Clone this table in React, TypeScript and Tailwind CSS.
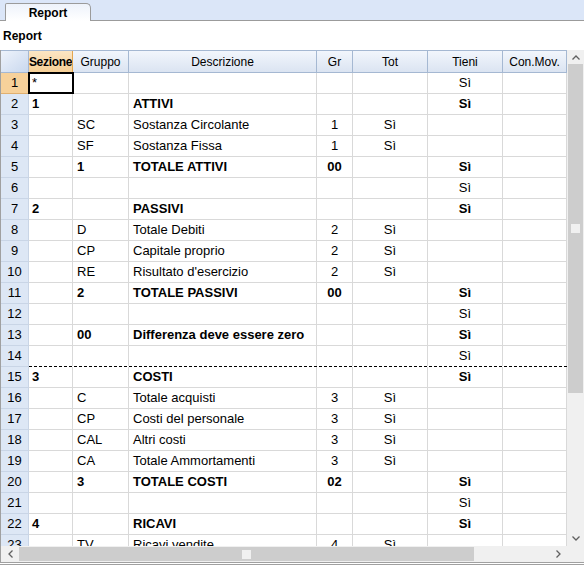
import React from "react";

type Row = {
  n: number;
  s?: string;
  g?: string;
  d?: string;
  gr?: string;
  tot?: string;
  t?: string;
  b?: boolean;
  tb?: boolean;
  dashBelow?: boolean;
};

const rows: Row[] = [
  { n: 1, s: "*", t: "Sì" },
  { n: 2, s: "1", d: "ATTIVI", t: "Sì", b: true, tb: true },
  { n: 3, g: "SC", d: "Sostanza Circolante", gr: "1", tot: "Sì" },
  { n: 4, g: "SF", d: "Sostanza Fissa", gr: "1", tot: "Sì" },
  { n: 5, g: "1", d: "TOTALE ATTIVI", gr: "00", t: "Sì", b: true, tb: true },
  { n: 6, t: "Sì" },
  { n: 7, s: "2", d: "PASSIVI", t: "Sì", b: true, tb: true },
  { n: 8, g: "D", d: "Totale Debiti", gr: "2", tot: "Sì" },
  { n: 9, g: "CP", d: "Capitale proprio", gr: "2", tot: "Sì" },
  { n: 10, g: "RE", d: "Risultato d'esercizio", gr: "2", tot: "Sì" },
  { n: 11, g: "2", d: "TOTALE PASSIVI", gr: "00", t: "Sì", b: true, tb: true },
  { n: 12, t: "Sì" },
  { n: 13, g: "00", d: "Differenza deve essere zero", t: "Sì", b: true, tb: true },
  { n: 14, t: "Sì", dashBelow: true },
  { n: 15, s: "3", d: "COSTI", t: "Sì", b: true, tb: true },
  { n: 16, g: "C", d: "Totale acquisti", gr: "3", tot: "Sì" },
  { n: 17, g: "CP", d: "Costi del personale", gr: "3", tot: "Sì" },
  { n: 18, g: "CAL", d: "Altri costi", gr: "3", tot: "Sì" },
  { n: 19, g: "CA", d: "Totale Ammortamenti", gr: "3", tot: "Sì" },
  { n: 20, g: "3", d: "TOTALE COSTI", gr: "02", t: "Sì", b: true, tb: true },
  { n: 21, t: "Sì" },
  { n: 22, s: "4", d: "RICAVI", t: "Sì", b: true, tb: true },
  { n: 23, g: "TV", d: "Ricavi vendite", gr: "4", tot: "Sì" },
];

export default function App() {
  const hdr =
    "h-full shrink-0 flex items-center justify-center border-r border-[#a5b8d2] bg-gradient-to-b from-[#f2f6fc] to-[#dbe4f2] whitespace-nowrap overflow-hidden";
  return (
    <div
      className="w-[584px] h-[565px] bg-white overflow-hidden flex flex-col text-black"
      style={{ fontFamily: '"Liberation Sans", Arial, sans-serif' }}
    >
      {/* Tab bar */}
      <div className="h-[21px] bg-[#dbe6f8] border-b border-[#9b9b9b] flex items-end pl-[5px] shrink-0">
        <div className="h-[18px] w-[86px] -mb-px bg-gradient-to-b from-[#eef3fb] to-white border border-b-0 border-[#9b9b9b] rounded-tr-[5px] rounded-tl-[2px] flex items-center justify-center text-[12px] font-bold">
          Report
        </div>
      </div>
      {/* Label */}
      <div className="h-[29px] shrink-0 flex items-center pl-[3px] text-[12px] font-bold">Report</div>

      {/* Grid area */}
      <div className="h-[496px] shrink-0 flex border-l border-[#a0a0a0]">
        <div className="w-[566px] overflow-hidden flex flex-col">
          {/* Header */}
          <div className="h-[23px] shrink-0 flex border-t border-b border-[#a5b8d2] text-[12px]">
            <div className="w-[28px] h-full shrink-0 border-r border-[#a5b8d2] bg-gradient-to-br from-[#eef3fb] to-[#c9d8ee]"></div>
            <div className="w-[44px] h-full shrink-0 flex items-center justify-center border-r border-[#e3a64f] bg-gradient-to-b from-[#fce6c4] to-[#f5cf96] font-bold tracking-[-0.3px] whitespace-nowrap overflow-hidden">
              Sezione
            </div>
            <div className={hdr + " w-[56px]"}>Gruppo</div>
            <div className={hdr + " w-[188px]"}>Descrizione</div>
            <div className={hdr + " w-[36px]"}>Gr</div>
            <div className={hdr + " w-[75px]"}>Tot</div>
            <div className={hdr + " w-[75px]"}>Tieni</div>
            <div className={hdr + " w-[64px]"}>Con.Mov.</div>
          </div>
          {/* Rows */}
          {rows.map((r) => {
            const bottom = r.dashBelow ? "border-b border-dashed border-b-black" : "border-b border-[#d9d9d9]";
            const c = "h-full shrink-0 flex items-center whitespace-nowrap overflow-hidden border-r border-r-[#d9d9d9] ";
            const w = r.b ? " font-bold" : "";
            return (
              <div key={r.n} className="h-[21px] shrink-0 flex text-[13px]">
                <div
                  className={
                    "w-[28px] h-full shrink-0 flex items-center justify-center border-r border-b " +
                    (r.n === 1 ? "bg-[#f7d19a] border-[#e0b070]" : "bg-[#dde7f5] border-[#c9d5e6]")
                  }
                >
                  {r.n}
                </div>
                <div className={"flex flex-1 " + bottom}>
                  <div
                    className={
                      c +
                      "w-[44px] pl-[3px]" +
                      w +
                      (r.n === 1 ? " outline-2 outline-black -outline-offset-1" : "")
                    }
                  >
                    {r.s ?? ""}
                  </div>
                  <div className={c + "w-[56px] pl-[4px]" + w}>{r.g ?? ""}</div>
                  <div className={c + "w-[188px] pl-[4px]" + w}>{r.d ?? ""}</div>
                  <div className={c + "w-[36px] justify-center" + w}>{r.gr ?? ""}</div>
                  <div className={c + "w-[75px] justify-center"}>{r.tot ?? ""}</div>
                  <div className={c + "w-[75px] justify-center" + (r.tb ? " font-bold" : "")}>{r.t ?? ""}</div>
                  <div className={c + "w-[64px]"}></div>
                </div>
              </div>
            );
          })}
        </div>
        {/* Vertical scrollbar */}
        <div className="w-[17px] bg-[#f0f0f0] flex flex-col shrink-0">
          <div className="h-[14px] flex items-center justify-center">
            <svg width="8" height="5" viewBox="0 0 8 5">
              <path d="M0.5 4.5 L4 1 L7.5 4.5" fill="none" stroke="#606060" strokeWidth="1.3" />
            </svg>
          </div>
          <div className="h-[329px] mx-px bg-[#cdcdcd] flex items-center justify-center">
            <div className="w-[9px] h-[9px] bg-[#f0f0f0]"></div>
          </div>
          <div className="flex-1"></div>
          <div className="h-[16px] flex items-center justify-center">
            <svg width="8" height="5" viewBox="0 0 8 5">
              <path d="M0.5 0.5 L4 4 L7.5 0.5" fill="none" stroke="#606060" strokeWidth="1.3" />
            </svg>
          </div>
        </div>
      </div>

      {/* Horizontal scrollbar */}
      <div className="h-[16px] shrink-0 flex bg-[#f0f0f0] border-l border-[#a0a0a0]">
        <div className="w-[18px] flex items-center justify-center">
          <svg width="5" height="8" viewBox="0 0 5 8">
            <path d="M4.5 0.5 L1 4 L4.5 7.5" fill="none" stroke="#606060" strokeWidth="1.3" />
          </svg>
        </div>
        <div className="w-[455px] my-px bg-[#cdcdcd] flex items-center justify-center">
          <div className="w-[9px] h-[9px] bg-[#f0f0f0]"></div>
        </div>
        <div className="flex-1"></div>
        <div className="w-[18px] flex items-center justify-center">
          <svg width="5" height="8" viewBox="0 0 5 8">
            <path d="M0.5 0.5 L4 4 L0.5 7.5" fill="none" stroke="#606060" strokeWidth="1.3" />
          </svg>
        </div>
        <div className="w-[17px]"></div>
      </div>
      <div className="h-[3px] shrink-0 border-t border-b border-[#a0a0a0] bg-white"></div>
    </div>
  );
}
